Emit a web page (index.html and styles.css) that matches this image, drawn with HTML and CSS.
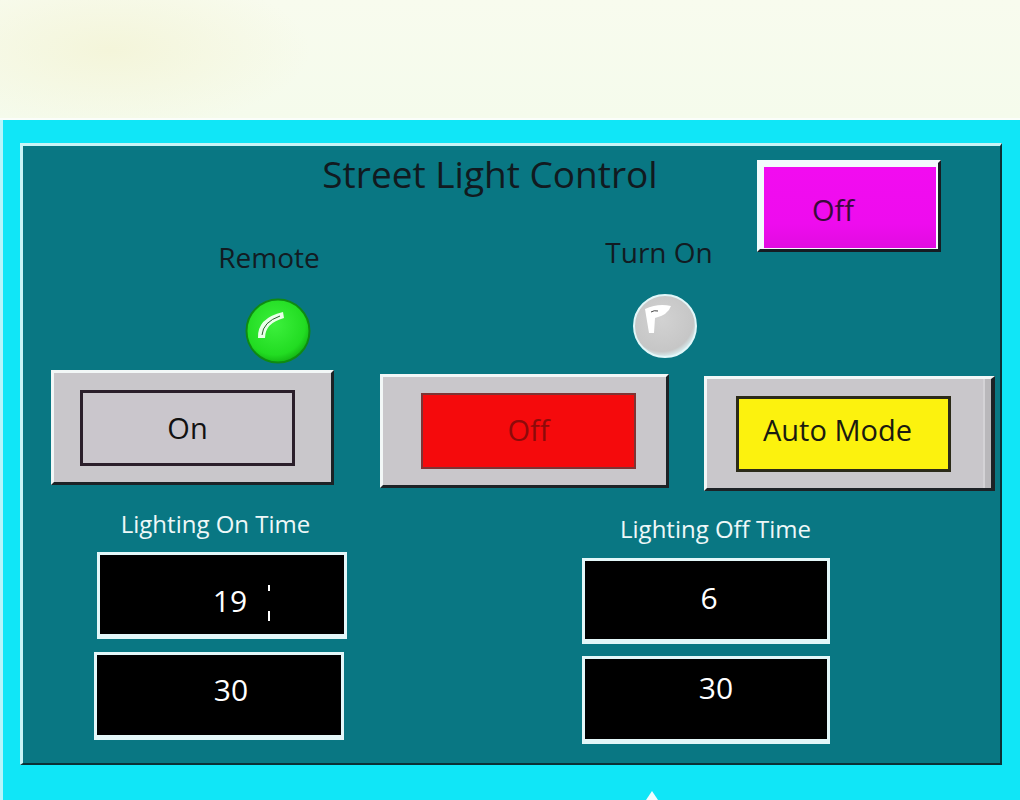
FILE: index.html
```html
<!DOCTYPE html>
<html lang="en">
<head>
    <meta charset="UTF-8">
    <meta name="viewport" content="width=device-width, initial-scale=1.0">
    <title>Street Light Control</title>
    <link rel="stylesheet" href="styles.css">
</head>
<body>
    <div class="sky"></div>

    <div class="frame">
        <div class="panel">
            <header class="panel-head">
                <h1 class="title">Street Light Control</h1>
                <div class="state-btn"><span class="state-face">Off</span></div>
            </header>

            <!-- indicator lamps -->
            <div class="lamps">
                <div class="lamp lamp-remote">
                    <span class="lamp-label">Remote</span>
                    <svg class="led" width="66" height="66" viewBox="0 0 66 66">
                        <defs>
                            <radialGradient id="greenGlow" cx="45%" cy="40%" r="60%">
                                <stop offset="0" stop-color="#3cf03c"/>
                                <stop offset="0.8" stop-color="#22dc22"/>
                                <stop offset="1" stop-color="#14b814"/>
                            </radialGradient>
                        </defs>
                        <circle cx="33" cy="33" r="31.5" fill="url(#greenGlow)" stroke="#0f8a12" stroke-width="2"/>
                        <path d="M13 40 Q12 20 38 14 L39 20 Q20 25 20 40 Z" fill="#eaffea"/>
                        <path d="M17 37 Q18 24 35 18" fill="none" stroke="#2b5a2b" stroke-width="1"/>
                    </svg>
                </div>
                <div class="lamp lamp-on">
                    <span class="lamp-label">Turn On</span>
                    <svg class="led" width="64" height="64" viewBox="0 0 64 64">
                        <defs>
                            <radialGradient id="greyGlow" cx="45%" cy="40%" r="60%">
                                <stop offset="0" stop-color="#d2d2d2"/>
                                <stop offset="0.85" stop-color="#c6c6c6"/>
                                <stop offset="1" stop-color="#d8eef0"/>
                            </radialGradient>
                        </defs>
                        <circle cx="32" cy="32" r="31" fill="url(#greyGlow)" stroke="#e2f7f9" stroke-width="2"/>
                        <path d="M12 15 Q25 9 38 12 Q35 21 22 24 L21 39 L16 39 Z" fill="#ffffff"/>
                        <path d="M18 18 Q21 16 25 17" fill="none" stroke="#444" stroke-width="1"/>
                    </svg>
                </div>
            </div>

            <!-- command buttons -->
            <div class="buttons">
                <div class="btn btn-on"><span class="face face-grey">On</span></div>
                <div class="btn btn-off"><span class="face face-red">Off</span></div>
                <div class="btn btn-auto"><span class="face face-yellow">Auto Mode</span></div>
            </div>

            <!-- on / off schedule -->
            <div class="times">
                <div class="time-col time-col-on">
                    <span class="time-label">Lighting On Time</span>
                    <div class="time-box box-hour">19<i class="tick"></i></div>
                    <div class="time-box box-min">30</div>
                </div>
                <div class="time-col time-col-off">
                    <span class="time-label">Lighting Off Time</span>
                    <div class="time-box box-hour">6</div>
                    <div class="time-box box-min">30</div>
                </div>
            </div>
        </div>
        <div class="pointer"></div>
    </div>
</body>
</html>
```

FILE: styles.css
```css
html, body {
    margin: 0;
    padding: 0;
}
body {
    width: 1020px;
    height: 800px;
    overflow: hidden;
    font-family: "Open Sans", "Noto Sans", sans-serif;
    color: #121b22;
    background-color: #f6fbec;
}
.sky {
    height: 118px;
    border-bottom: 2px solid #fbfefa;
    background:
        radial-gradient(ellipse 200px 80px at 110px 50px, #f4f5da, rgba(244, 245, 218, 0)),
        linear-gradient(180deg, #f8fbee, #f5fbec);
}
.frame {
    height: 680px;
    box-sizing: border-box;
    padding: 23px 0 0 17px;
    background-color: #10e6f7;
    border-left: 3px solid #b4f5fb;
}
.panel {
    width: 982px;
    height: 622px;
    box-sizing: border-box;
    background-color: #097783;
    border-style: solid;
    border-width: 3px 2px 2px 3px;
    border-color: #c9f4f7 #0b3036 #0b3036 #c9f4f7;
}

/* header */
.panel-head {
    display: flex;
    align-items: flex-start;
    height: 92px;
}
.title {
    width: 420px;
    margin: 6px 0 0 257px;
    font-size: 37px;
    font-weight: 400;
    line-height: 44px;
    text-align: center;
    color: #111a20;
}
.state-btn {
    flex-shrink: 0;
    width: 184px;
    height: 92px;
    box-sizing: border-box;
    margin: 14px 59px 0 auto;
    padding: 4px 0 0 4px;
    background-color: #f3fbfc;
    border-right: 3px solid #161c22;
    border-bottom: 3px solid #161c22;
    border-top: 3px solid #f3fbfc;
    border-left: 3px solid #f3fbfc;
}
.state-face {
    display: flex;
    align-items: center;
    width: 172px;
    height: 81px;
    box-sizing: border-box;
    padding: 4px 0 0 48px;
    font-size: 29px;
    color: #3a0a3a;
    background: linear-gradient(180deg, #f20cf0, #ee0cee 70%, #e10ce0);
}

/* lamps */
.lamps {
    display: flex;
    align-items: flex-start;
    height: 132px;
    padding-left: 195px;
}
.lamp {
    display: flex;
    flex-direction: column;
    align-items: center;
    width: 120px;
}
.lamp-label {
    font-size: 28px;
    line-height: 32px;
    white-space: nowrap;
    color: #121b22;
}
.lamp-remote {
    margin-top: 3px;
}
.lamp-remote .lamp-label {
    margin-right: 18px;
}
.lamp-remote .led {
    margin-top: 25px;
}
.lamp-on {
    margin-left: 267px;
    margin-top: -2px;
}
.lamp-on .lamp-label {
    margin-right: 12px;
}
.lamp-on .led {
    margin-top: 26px;
}

/* buttons */
.buttons {
    display: flex;
    align-items: flex-start;
    height: 121px;
    padding-left: 28px;
}
.btn {
    display: flex;
    align-items: center;
    box-sizing: border-box;
    background-color: #c9c7cb;
    border-style: solid;
    border-width: 3px;
    border-color: #f2f7f7 #1c2226 #1c2226 #f2f7f7;
}
.btn-on {
    width: 283px;
    height: 115px;
    padding-left: 26px;
}
.btn-off {
    width: 289px;
    height: 114px;
    margin: 4px 0 0 46px;
    padding-left: 38px;
}
.btn-auto {
    width: 291px;
    height: 115px;
    margin: 6px 0 0 35px;
    padding-left: 29px;
    border-right-width: 4px;
    box-shadow: inset -6px 0 0 #b9b8bb, inset -8px 0 0 #d4d3d6;
}
.face {
    display: flex;
    align-items: center;
    justify-content: center;
    width: 215px;
    height: 76px;
    box-sizing: border-box;
    font-size: 29px;
}
.face-grey {
    background-color: #cac6cc;
    border: 3px solid #2a1e2a;
    color: #111;
}
.face-red {
    padding-bottom: 4px;
    background-color: #f50a0c;
    border: 2px solid #7e3434;
    color: #8e0a0a;
}
.face-yellow {
    justify-content: flex-start;
    padding: 0 0 8px 24px;
    background-color: #fcf20e;
    border: 3px solid #2b2a18;
    color: #1a1a10;
}

/* schedule */
.times {
    display: flex;
    padding-left: 71px;
}
.time-col {
    display: flex;
    flex-direction: column;
    align-items: flex-start;
    width: 253px;
}
.time-label {
    align-self: center;
    font-size: 24px;
    line-height: 28px;
    white-space: nowrap;
    color: #eef8f8;
}
.time-col-on .time-label {
    margin: 19px 10px 0 0;
}
.time-col-off {
    margin-left: 235px;
}
.time-col-off .time-label {
    margin: 24px 0 0 14px;
}
.time-box {
    position: relative;
    display: flex;
    align-items: center;
    justify-content: center;
    width: 250px;
    box-sizing: border-box;
    padding-left: 16px;
    background-color: #000;
    border-style: solid;
    border-width: 3px 3px 5px 3px;
    border-color: #e3f7f9;
    font-size: 30px;
    color: #fff;
}
.time-col-on .box-hour {
    height: 87px;
    margin: 14px 0 0 3px;
    padding-top: 12px;
}
.time-col-on .box-min {
    height: 88px;
    margin-top: 13px;
    padding: 0 0 12px 24px;
}
.time-col-off .time-box {
    width: 248px;
    padding-left: 6px;
}
.time-col-off .box-hour {
    height: 86px;
    margin-top: 15px;
    padding-bottom: 6px;
}
.time-col-off .box-min {
    height: 88px;
    margin-top: 12px;
    padding: 0 0 24px 20px;
}
.tick {
    position: absolute;
    left: 168px;
    top: 30px;
    width: 2px;
    height: 36px;
    background: linear-gradient(180deg, #fff 0, #fff 6px, transparent 6px, transparent 26px, #fff 26px);
}

.pointer {
    width: 0;
    height: 0;
    margin: 26px 0 0 626px;
    border-left: 6px solid transparent;
    border-right: 6px solid transparent;
    border-bottom: 9px solid #f2fdff;
}
```
